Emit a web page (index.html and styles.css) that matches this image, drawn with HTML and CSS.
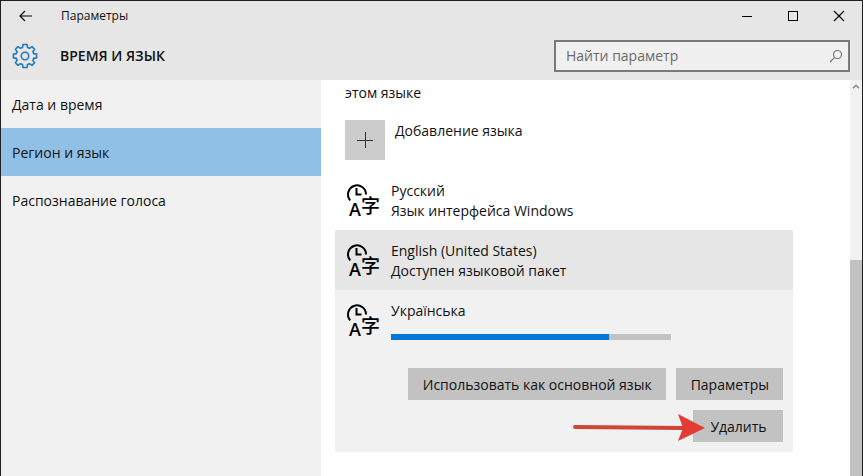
FILE: index.html
```html
<!DOCTYPE html>
<html lang="ru">
<head>
<meta charset="utf-8">
<meta name="viewport" content="width=device-width, initial-scale=1">
<title>Параметры</title>
<link rel="stylesheet" href="styles.css">
</head>
<body>
<div class="window">
  <header class="top">
    <div class="titlebar">
      <button class="icon-button back" type="button" aria-label="Назад">
        <svg width="14" height="12" viewBox="0 0 14 12"><path d="M14 6H2M7 1L2 6l5 5" fill="none" stroke="#000" stroke-width="1.200"/></svg>
      </button>
      <span class="app-name">Параметры</span>
      <div class="controls">
        <button class="icon-button" type="button" aria-label="Свернуть"><svg width="12" height="12"><path d="M1 6.500h10" stroke="#000"/></svg></button>
        <button class="icon-button" type="button" aria-label="Развернуть"><svg width="12" height="12"><rect x="1.500" y="1.500" width="9" height="9" fill="none" stroke="#000"/></svg></button>
        <button class="icon-button" type="button" aria-label="Закрыть"><svg width="12" height="12"><path d="M1 1l10 10M11 1L1 11" stroke="#000" stroke-width="1.200"/></svg></button>
      </div>
    </div>
    <div class="heading">
      <svg class="gear" width="26" height="26" viewBox="-13 -13 26 26" fill="none" stroke="#2478bd" stroke-width="1.600" stroke-linejoin="round">
        <path d="M-2 -11.500H2L2.500 -8.600L4.600 -7.700L7 -9.400L9.600 -6.800L7.900 -4.400L8.700 -2.400L11.600 -1.900V1.900L8.700 2.400L7.900 4.400L9.600 6.800L7 9.400L4.600 7.700L2.500 8.600L2 11.500H-2L-2.500 8.600L-4.600 7.700L-7 9.400L-9.600 6.800L-7.900 4.400L-8.700 2.400L-11.600 1.900V-1.900L-8.700 -2.400L-7.900 -4.400L-9.600 -6.800L-7 -9.400L-4.600 -7.700L-2.500 -8.600Z"/>
        <circle r="3.700"/>
      </svg>
      <h1>ВРЕМЯ И ЯЗЫК</h1>
      <label class="search">
        <input type="search" placeholder="Найти параметр" aria-label="Найти параметр">
        <svg width="14" height="14" viewBox="0 0 14 14" fill="none" stroke="#777" stroke-width="1.200"><circle cx="8.500" cy="5.500" r="4"/><path d="M5.700 8.300L1 13"/></svg>
      </label>
    </div>
  </header>
  <div class="body">
    <nav class="sidebar">
      <a href="#date">Дата и время</a>
      <a href="#region" class="current" aria-current="page">Регион и язык</a>
      <a href="#speech">Распознавание голоса</a>
    </nav>
    <main class="content">
      <p class="intro">этом языке</p>
      <button class="add" type="button">
        <span class="add-icon"><svg width="18" height="18"><path d="M1 9.500h16M9.500 1v16" stroke="#333" stroke-width="1"/></svg></span>
        <span class="add-label">Добавление языка</span>
      </button>
      <ul class="languages">
        <li class="language">
          <svg class="lang-icon" viewBox="0 0 36 40" aria-hidden="true"><path d="M5.200 20.300A9 9 0 1 1 21 14.500M11.500 8v6.500h5"/><text class="glyph-latin" x="4" y="36">A</text><text class="glyph-han" x="16" y="33">字</text></svg>
          <div class="info"><span>Русский</span><span>Язык интерфейса Windows</span></div>
        </li>
        <li class="language hovered">
          <svg class="lang-icon" viewBox="0 0 36 40" aria-hidden="true"><path d="M5.200 20.300A9 9 0 1 1 21 14.500M11.500 8v6.500h5"/><text class="glyph-latin" x="4" y="36">A</text><text class="glyph-han" x="16" y="33">字</text></svg>
          <div class="info"><span>English (United States)</span><span>Доступен языковой пакет</span></div>
        </li>
        <li class="language selected">
          <svg class="lang-icon" viewBox="0 0 36 40" aria-hidden="true"><path d="M5.200 20.300A9 9 0 1 1 21 14.500M11.500 8v6.500h5"/><text class="glyph-latin" x="4" y="36">A</text><text class="glyph-han" x="16" y="33">字</text></svg>
          <div class="info"><span>Українська</span><progress value="78" max="100" aria-label="Загрузка"></progress></div>
          <div class="actions">
            <button type="button">Использовать как основной язык</button>
            <button type="button">Параметры</button>
            <div class="remove">
              <button type="button">Удалить</button>
              <svg class="arrow" width="134" height="30" viewBox="0 0 134 30" aria-hidden="true"><path d="M3 14L112 15" stroke="#cf463c" stroke-width="4" stroke-linecap="round"/><path d="M106 1L133 15L106 28L111 15Z" fill="#e43c33"/></svg>
            </div>
          </div>
        </li>
      </ul>
    </main>
    <div class="scrollbar" aria-hidden="true">
      <svg width="8" height="5" viewBox="0 0 8 5"><path d="M1 4.300L4 1.300L7 4.300" fill="none" stroke="#777" stroke-width="1.300"/></svg>
      <div class="thumb"></div>
    </div>
  </div>
</div>
</body>
</html>
```
FILE: styles.css
```css
* {
  box-sizing: border-box;
}

body {
  margin: 0;
  font: 14px/20px "Open Sans", "Noto Sans CJK SC", sans-serif;
  color: #111;
}

button {
  font: inherit;
  color: inherit;
  border: 0;
  padding: 0;
}

.window {
  display: flex;
  flex-direction: column;
  min-height: 100vh;
  border: 1px solid #231f20;
  border-bottom: 0;
}

.top {
  background: #e6e6e6;
}

.titlebar {
  display: flex;
  align-items: center;
  height: 30px;
}

.icon-button {
  display: flex;
  align-items: center;
  justify-content: center;
  width: 46px;
  height: 30px;
  background: none;
}

.back {
  width: 48px;
}

.app-name {
  margin-left: 12px;
  font-size: 12px;
}

.controls {
  display: flex;
  margin-left: auto;
}

.heading {
  display: flex;
  align-items: center;
  height: 49px;
  padding: 0 12px 0 11px;
}

h1 {
  margin: 0 0 0 22px;
  font-size: 14px;
  font-weight: 600;
}

.search {
  display: flex;
  align-items: center;
  width: 296px;
  height: 32px;
  margin-left: auto;
  padding: 0 5px 0 10px;
  border: 2px solid #7a7a7a;
  background: #f0f0f0;
}

.search input {
  flex: 1;
  min-width: 0;
  padding: 0;
  border: 0;
  outline: 0;
  background: none;
  font: inherit;
}

.search input::placeholder {
  color: #6b6b6b;
}

.body {
  display: flex;
  flex: 1;
}

.sidebar {
  width: 320px;
  background: #f1f1f1;
}

.sidebar a {
  display: block;
  padding: 15px 11px 13px;
  color: inherit;
  text-decoration: none;
}

.sidebar .current {
  background: #91c0e6;
}

.content {
  flex: 1;
  padding: 3px 14px 24px;
  background: #fff;
}

.intro {
  margin: 0 10px 17px;
}

.add {
  display: flex;
  gap: 10px;
  margin: 0 10px 10px;
  background: none;
  text-align: left;
}

.add-icon {
  display: flex;
  align-items: center;
  justify-content: center;
  width: 40px;
  height: 40px;
  background: #ccc;
}

.add-label {
  padding-top: 1px;
}

.languages {
  max-width: 458px;
  margin: 0;
  padding: 0;
  list-style: none;
}

.language {
  display: flex;
  flex-wrap: wrap;
  gap: 0 10px;
  padding: 10px;
}

.hovered {
  background: #e6e6e6;
}

.selected {
  background: #f1f1f1;
}

.lang-icon {
  width: 36px;
  height: 40px;
  overflow: visible;
}

.lang-icon path {
  fill: none;
  stroke: #000;
  stroke-width: 2;
}

.glyph-latin {
  font: 600 18px "Open Sans", sans-serif;
}

.glyph-han {
  font: 500 19px "Noto Sans CJK SC", sans-serif;
}

.info {
  display: flex;
  flex: 1;
  flex-direction: column;
  height: 40px;
  padding-top: 1px;
}

progress {
  appearance: none;
  width: 280px;
  height: 6px;
  margin-top: 13px;
  border: 0;
  background: #c2c2c2;
}

progress::-webkit-progress-bar {
  background: #c2c2c2;
}

progress::-webkit-progress-value {
  background: #0078d7;
}

.actions {
  display: flex;
  flex-wrap: wrap;
  justify-content: flex-end;
  gap: 10px;
  width: 100%;
  margin-top: 28px;
}

.actions button {
  min-width: 90px;
  height: 32px;
  padding: 1px 14px 0 15px;
  background: #c2c2c2;
}

.remove {
  position: relative;
}

.arrow {
  position: absolute;
  top: 3px;
  right: 77px;
}

.scrollbar {
  display: flex;
  flex-direction: column;
  align-items: center;
  width: 12px;
  padding-top: 4px;
  background: #f1f1f1;
}

.thumb {
  width: 100%;
  height: 55%;
  margin-top: auto;
  background: #c2c2c2;
}
```
